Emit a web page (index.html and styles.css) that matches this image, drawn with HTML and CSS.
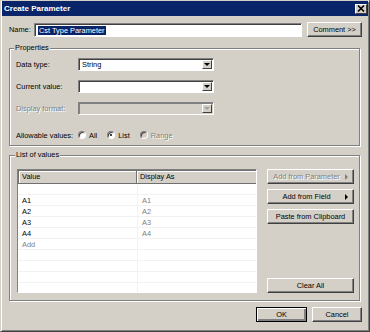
FILE: index.html
```html
<!DOCTYPE html>
<html lang="en">
<head>
    <meta charset="UTF-8">
    <title>Create Parameter</title>
    <link rel="stylesheet" href="styles.css">
</head>
<body>
    <div class="dialog">
      <div class="titlebar">
        <span class="title">Create Parameter</span>
        <span class="close">
          <svg width="8" height="7" viewBox="0 0 8 7"><path d="M1 0.5 L7 6.5 M7 0.5 L1 6.5" stroke="#000" stroke-width="1.6"/></svg>
        </span>
      </div>

      <div class="content">
        <div class="name-row">
          <span class="name-label">Name:</span>
          <div class="textbox"><span class="selected">Cst Type Parameter</span></div>
          <button class="btn comment">Comment &gt;&gt;</button>
        </div>

        <fieldset class="group props">
          <legend>Properties</legend>
          <div class="field">
            <span class="field-label">Data type:</span>
            <div class="combo"><span class="combo-text">String</span><span class="drop"><i class="tri-down"></i></span></div>
          </div>
          <div class="field">
            <span class="field-label">Current value:</span>
            <div class="combo"><span class="combo-text"></span><span class="drop"><i class="tri-down"></i></span></div>
          </div>
          <div class="field">
            <span class="field-label disabled">Display format:</span>
            <div class="combo off"><span class="combo-text"></span><span class="drop"><i class="tri-down"></i></span></div>
          </div>
          <div class="field allow">
            <span class="field-label">Allowable values:</span>
            <div class="radios">
              <span class="radio"><i class="dot"></i>All</span>
              <span class="radio on"><i class="dot"></i>List</span>
              <span class="radio disabled"><i class="dot"></i>Range</span>
            </div>
          </div>
        </fieldset>

        <fieldset class="group values">
          <legend>List of values</legend>
          <div class="values-body">
            <div class="list">
              <div class="list-head">
                <span>Value</span>
                <span>Display As</span>
              </div>
              <div class="row"><span></span><span></span></div>
              <div class="row"><span>A1</span><span class="dim">A1</span></div>
              <div class="row"><span>A2</span><span class="dim">A2</span></div>
              <div class="row"><span>A3</span><span class="dim">A3</span></div>
              <div class="row"><span>A4</span><span class="dim">A4</span></div>
              <div class="row"><span class="dim">Add</span><span></span></div>
              <div class="row"><span></span><span></span></div>
              <div class="row"><span></span><span></span></div>
              <div class="row"><span></span><span></span></div>
              <div class="row"><span></span><span></span></div>
            </div>
            <div class="side">
              <button class="btn menu disabled"><span class="btn-text">Add from Parameter</span><i class="tri-right"></i></button>
              <button class="btn menu"><span class="btn-text">Add from Field</span><i class="tri-right"></i></button>
              <button class="btn">Paste from Clipboard</button>
              <button class="btn clear">Clear All</button>
            </div>
          </div>
        </fieldset>

        <div class="footer">
          <button class="btn ok">OK</button>
          <button class="btn cancel">Cancel</button>
        </div>
      </div>
    </div>
</body>
</html>
```

FILE: styles.css
```css
* {
  box-sizing: border-box;
}

body {
  margin: 0;
  font-family: "Liberation Sans", Arial, sans-serif;
  font-size: 7.4px;
  color: #000;
}

.dialog {
  width: 370px;
  height: 332px;
  background: #d4d0c8;
  border: 1px solid;
  border-color: #d4d0c8 #404040 #404040 #d4d0c8;
  box-shadow: inset 1px 1px 0 #fff, inset -1px -1px 0 #808080;
  padding: 0 1px 1px 1px;
}

.titlebar {
  height: 15px;
  background: #0a246a;
  color: #fff;
  font-size: 8px;
  font-weight: bold;
  display: flex;
  align-items: center;
  justify-content: space-between;
  padding: 0 1px 0 2px;
}

.close {
  width: 12px;
  height: 10px;
  background: #d4d0c8;
  border: 1px solid;
  border-color: #fff #404040 #404040 #fff;
  display: flex;
  align-items: center;
  justify-content: center;
}

.content {
  padding: 6px 6px 0 7px;
}

.name-row {
  display: flex;
  align-items: center;
  height: 15px;
}

.name-label {
  width: 25px;
}

.textbox {
  width: 268px;
  height: 14px;
  background: #fff;
  border: 1px solid;
  border-color: #808080 #fff #fff #808080;
  box-shadow: inset 1px 1px 0 #404040;
  padding: 2px 0 0 3px;
  margin-right: 5px;
}

.selected {
  background: #0a246a;
  color: #fff;
  display: inline-block;
  line-height: 9px;
  padding: 0 1px;
}

.btn {
  font: inherit;
  color: #000;
  height: 15px;
  padding: 0;
  background: #d4d0c8;
  border: 1px solid;
  border-color: #fff #404040 #404040 #fff;
  box-shadow: inset -1px -1px 0 #808080;
  display: flex;
  align-items: center;
  justify-content: center;
}

.comment {
  width: 55px;
}

.group {
  margin: 6px 2px 0 0;
  padding: 5px 6px 3px 6px;
  border: 1px solid #808080;
  box-shadow: 1px 1px 0 #fff, inset 1px 1px 0 #fff;
  min-width: 0;
}

.group legend {
  line-height: 10px;
  padding: 0 1px;
  margin-left: -2px;
  background: #d4d0c8;
}

.field {
  display: flex;
  align-items: center;
  height: 13px;
  margin-bottom: 9px;
}

.field-label {
  width: 62px;
}

.disabled {
  color: #808080;
  text-shadow: 1px 1px 0 #fff;
}

.combo {
  width: 136px;
  height: 13px;
  background: #fff;
  border: 1px solid;
  border-color: #808080 #fff #fff #808080;
  box-shadow: inset 1px 1px 0 #404040;
  display: flex;
  padding: 1px 1px 1px 2px;
}

.combo-text {
  flex: 1;
  line-height: 10px;
  padding-left: 1px;
}

.drop {
  width: 10px;
  background: #d4d0c8;
  border: 1px solid;
  border-color: #fff #404040 #404040 #fff;
  display: flex;
  align-items: center;
  justify-content: center;
}

.tri-down {
  width: 0;
  height: 0;
  border-left: 3px solid transparent;
  border-right: 3px solid transparent;
  border-top: 3px solid #000;
}

.combo.off {
  background: #d4d0c8;
  box-shadow: inset 1px 1px 0 #808080;
}

.combo.off .tri-down {
  border-top-color: #a0a0a0;
}

.allow {
  height: 14px;
  margin-top: 13px;
  margin-bottom: 0;
}

.radios {
  display: flex;
  gap: 10px;
}

.radio {
  display: flex;
  align-items: center;
  gap: 3px;
}

.dot {
  width: 8px;
  height: 8px;
  border-radius: 50%;
  background: #fff;
  border: 1px solid;
  border-color: #808080 #fff #fff #808080;
  box-shadow: inset 1px 1px 0 #404040;
  display: flex;
  align-items: center;
  justify-content: center;
}

.radio.on .dot::after {
  content: "";
  width: 2px;
  height: 2px;
  border-radius: 50%;
  background: #000;
}

.radio.disabled .dot {
  background: #d4d0c8;
}

.values {
  margin-top: 4px;
  padding: 9px 4px 7px 7px;
}

.values-body {
  display: flex;
  gap: 10px;
}

.list {
  width: 240px;
  height: 124px;
  background: #fff;
  border: 1px solid;
  border-color: #808080 #fff #fff #808080;
  overflow: hidden;
}

.list-head,
.row {
  display: grid;
  grid-template-columns: 119px 120px;
}

.list-head span {
  height: 14px;
  line-height: 12px;
  padding-left: 3px;
  background: #d4d0c8;
  border: 1px solid #707070;
  box-shadow: inset 1px 1px 0 #fff;
}

.list-head span + span {
  border-left: none;
}

.row span {
  height: 11px;
  line-height: 11px;
  padding-left: 4px;
  border-bottom: 1px solid #f2f2f2;
}

.row span + span {
  border-left: 1px solid #f2f2f2;
}

.dim {
  color: #808080;
}

.side {
  width: 87px;
  display: flex;
  flex-direction: column;
}

.side .btn {
  margin-bottom: 5px;
}

.menu .btn-text {
  flex: 1;
  text-align: center;
}

.tri-right {
  width: 0;
  height: 0;
  margin-right: 5px;
  border-top: 3px solid transparent;
  border-bottom: 3px solid transparent;
  border-left: 3px solid #000;
}

.menu.disabled .tri-right {
  border-left-color: #808080;
}

.clear {
  margin-top: auto;
}

.side .btn.clear {
  margin-bottom: 0;
}

.footer {
  display: flex;
  justify-content: flex-end;
  gap: 5px;
  margin-top: 6px;
}

.ok {
  width: 51px;
  border-color: #000;
  box-shadow: inset 1px 1px 0 #fff, inset -2px -2px 0 #808080;
}

.cancel {
  width: 50px;
}
```
